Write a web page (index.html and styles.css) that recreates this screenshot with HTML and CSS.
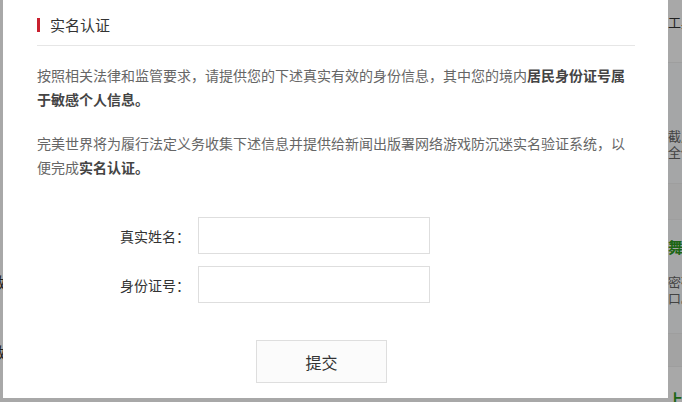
FILE: index.html
```html
<!DOCTYPE html>
<html lang="zh-CN">
<head>
  <meta charset="UTF-8">
  <meta name="viewport" content="width=device-width, initial-scale=1.0">
  <title>实名认证</title>
  <link rel="stylesheet" href="styles.css">
</head>
<body>
  <div class="page">
    <div class="page-side">
      <div class="band band-top"><span class="frag dark">工具</span></div>
      <div class="band band-a"><span class="frag">截用</span><span class="frag">全保</span></div>
      <div class="band band-b"></div>
      <div class="band band-a2">
        <span class="frag green">舞</span>
        <span class="frag gap">密码</span>
        <span class="frag">口。</span>
      </div>
      <div class="band band-b2"></div>
      <div class="band band-a4"><span class="frag green">上一</span></div>
    </div>
    <div class="page-left">
      <span class="frag-left l1">数</span>
      <span class="frag-left l2">数</span>
    </div>
  </div>
  <div class="mask"></div>

  <div class="dialog">
    <div class="dialog-title">
      <span class="title-bar"></span>
      <h3>实名认证</h3>
    </div>
    <div class="dialog-body">
      <p>按照相关法律和监管要求，请提供您的下述真实有效的身份信息，其中您的境内<strong>居民身份证号属于敏感个人信息。</strong></p>
      <p>完美世界将为履行法定义务收集下述信息并提供给新闻出版署网络游戏防沉迷实名验证系统，以便完成<strong>实名认证。</strong></p>

      <form class="auth-form" id="authForm">
        <div class="form-row">
          <label for="realName">真实姓名：</label>
          <input type="text" id="realName">
        </div>
        <div class="form-row">
          <label for="idCard">身份证号：</label>
          <input type="text" id="idCard">
        </div>
        <button type="submit" class="submit-btn">提交</button>
      </form>
    </div>
  </div>
</body>
</html>
```

FILE: styles.css
```css
* {
  box-sizing: border-box;
}
body {
  margin: 0;
  width: 682px;
  height: 402px;
  overflow: hidden;
  font-family: "Noto Sans CJK SC", "Liberation Sans", sans-serif;
  background: #ffffff;
}
.page {
  height: 402px;
  position: relative;
}
.page-side {
  position: absolute;
  top: 0;
  left: 668px;
  width: 60px;
}
.band {
  overflow: hidden;
  border-bottom: 1px solid #f0f0f0;
  background: #ffffff;
}
.band-top { height: 63px; padding-top: 14px; }
.band-a { height: 121px; padding-top: 65px; background: #fbfcfd; }
.band-b { height: 36px; background: #f7f7f7; }
.band-a2 { height: 114px; padding-top: 19px; background: #fbfcfd; }
.band-b2 { height: 33px; background: #f7f7f7; }
.band-a4 { height: 40px; padding-top: 24px; }
.frag {
  display: block;
  font-size: 13px;
  line-height: 16px;
  color: #666;
  white-space: nowrap;
}
.frag.gap {
  margin-top: 19px;
}
.frag.dark {
  color: #333;
}
.frag.green {
  color: #2d9a1e;
  font-size: 15px;
  font-weight: bold;
}
.page-left {
  position: absolute;
  top: 0;
  left: -10px;
}
.frag-left {
  position: absolute;
  left: 0;
  font-size: 16px;
  color: #333;
}
.frag-left.l1 { top: 270px; }
.frag-left.l2 { top: 340px; }
.mask {
  position: fixed;
  inset: 0;
  background: rgba(0, 0, 0, 0.34);
}
.dialog {
  position: absolute;
  left: 3px;
  top: 0;
  width: 665px;
  height: 398px;
  background: #ffffff;
  padding: 0 33px 0 34px;
}
.dialog-title {
  display: flex;
  align-items: center;
  height: 46px;
  padding-top: 4px;
  border-bottom: 1px solid #e6e6e6;
}
.title-bar {
  width: 3px;
  height: 14px;
  background: #c9202f;
  margin-right: 10px;
}
.dialog-title h3 {
  margin: 0;
  font-size: 15px;
  font-weight: normal;
  color: #333;
  line-height: 20px;
}
.dialog-body {
  padding-top: 17px;
}
.dialog-body p {
  margin: 0 0 20px;
  font-size: 14px;
  line-height: 24px;
  color: #666;
}
.dialog-body strong {
  color: #444;
}
.auth-form {
  padding-top: 18px;
}
.form-row {
  display: flex;
  align-items: center;
  margin-bottom: 12px;
}
.form-row label {
  width: 161px;
  text-align: right;
  font-size: 14px;
  color: #333;
  padding-right: 8px;
}
.form-row input {
  width: 232px;
  height: 37px;
  border: 1px solid #dedede;
  padding: 0 10px;
  font-size: 14px;
  outline: none;
}
.submit-btn {
  display: block;
  margin: 37px 0 0 219px;
  width: 131px;
  height: 43px;
  background: #fbfbfb;
  border: 1px solid #dedede;
  font-family: inherit;
  font-size: 16px;
  color: #333;
  cursor: pointer;
}
.submit-btn:hover {
  background: #f2f2f2;
}
```
